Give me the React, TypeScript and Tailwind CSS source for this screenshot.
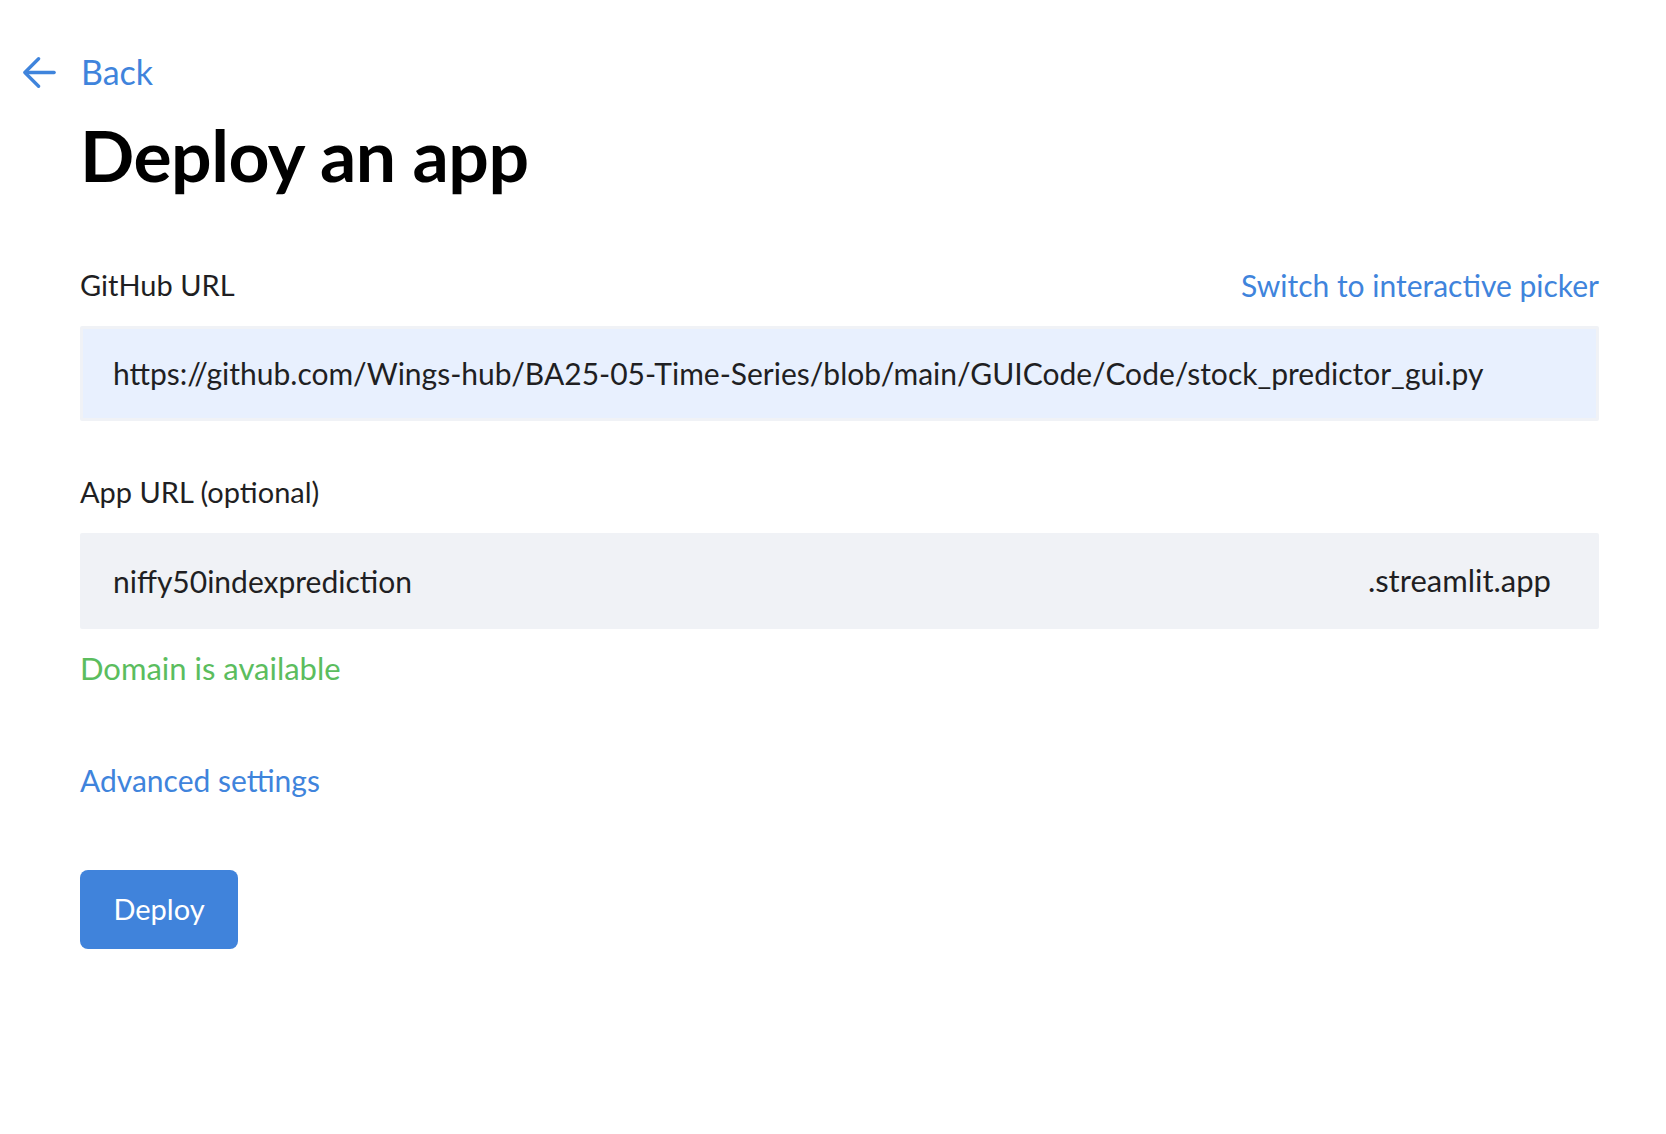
import React from "react";

const font = { fontFamily: "Lato, 'Noto Sans', sans-serif" };

function ArrowLeft() {
  return (
    <svg width="33" height="33" viewBox="3 3 18 18" fill="none" stroke="#3f84dc" strokeWidth="1.8" strokeLinecap="round" strokeLinejoin="round">
      <path d="M20 12H4.5" />
      <path d="M11.5 4.5L4 12l7.5 7.5" />
    </svg>
  );
}

export default function App() {
  const [githubUrl, setGithubUrl] = React.useState(
    "https://github.com/Wings-hub/BA25-05-Time-Series/blob/main/GUICode/Code/stock_predictor_gui.py"
  );
  const [appUrl, setAppUrl] = React.useState("niffy50indexprediction");

  return (
    <div className="min-h-screen bg-white text-[#1f1f23]" style={font}>
      <div className="pt-[55px] pl-[23px]">
        <a href="#" className="flex items-center gap-[25px] text-[34px] leading-none text-[#3f84dc] w-max">
          <ArrowLeft />
          <span>Back</span>
        </a>
      </div>

      <div className="ml-[80px] w-[1519px]">
        <h1 className="mt-[30px] text-[71.5px] font-bold leading-none text-black tracking-[-0.5px]">Deploy an app</h1>

        <div className="mt-[79px] flex items-center justify-between">
          <label className="text-[29px] leading-none">GitHub URL</label>
          <a href="#" className="text-[30px] leading-none text-[#3f84dc]">
            Switch to interactive picker
          </a>
        </div>
        <div className="mt-[26px] h-[95px] bg-[#f0f2f6] p-[3px] rounded-[2px]">
          <input
            value={githubUrl}
            onChange={(e) => setGithubUrl(e.target.value)}
            className="w-full h-full bg-[#e8f0fe] px-[30px] text-[30px] text-[#1f1f23] outline-none"
            style={font}
          />
        </div>

        <label className="block mt-[56px] text-[29px] leading-none">App URL (optional)</label>
        <div className="mt-[27px] h-[96px] bg-[#f0f2f6] flex items-center pl-[33px] pr-[48px] rounded-[2px]">
          <input
            value={appUrl}
            onChange={(e) => setAppUrl(e.target.value)}
            className="flex-1 h-full bg-transparent text-[30px] text-[#1f1f23] outline-none"
            style={font}
          />
          <span className="text-[31px]">.streamlit.app</span>
        </div>
        <div className="mt-[24px] text-[31px] leading-none text-[#5bbd5e]">Domain is available</div>

        <a href="#" className="block mt-[81px] text-[30px] leading-none text-[#3f84dc] w-max">
          Advanced settings
        </a>

        <button className="mt-[75px] w-[158px] h-[79px] rounded-[8px] bg-[#4083db] text-white text-[29px]" style={font}>
          Deploy
        </button>
      </div>
    </div>
  );
}
